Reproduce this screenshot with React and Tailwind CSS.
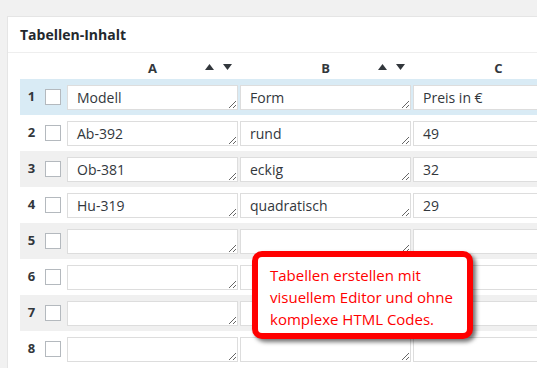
import React from 'react';

const rows = [
  ['Modell', 'Form', 'Preis in €'],
  ['Ab-392', 'rund', '49'],
  ['Ob-381', 'eckig', '32'],
  ['Hu-319', 'quadratisch', '29'],
  ['', '', ''],
  ['', '', ''],
  ['', '', ''],
  ['', '', ''],
];

const columns = ['A', 'B', 'C'];

const rowBg = (index) => {
  if (index === 0) return 'bg-[#d9ebf5]';
  return index % 2 === 0 ? 'bg-[#f0f0f0]' : 'bg-white';
};

const Cell = ({ value }) => (
  <textarea
    defaultValue={value}
    rows={1}
    className="block w-[171px] h-[25px] shrink-0 resize overflow-hidden border border-[#dddddd] bg-white px-[9px] py-[2px] text-[14px] leading-[19px] text-[#32373c] outline-none"
    style={{ fontFamily: '"Open Sans", sans-serif' }}
  />
);

const SortArrows = () => (
  <span className="absolute right-[6px] top-[5px] flex gap-[9px]">
    <svg width="9" height="6" viewBox="0 0 9 6">
      <path d="M4.5 0 L9 6 L0 6 Z" fill="#32373c" />
    </svg>
    <svg width="9" height="6" viewBox="0 0 9 6">
      <path d="M0 0 L9 0 L4.5 6 Z" fill="#32373c" />
    </svg>
  </span>
);

const App = () => {
  return (
    <div
      className="relative w-[537px] h-[368px] overflow-hidden bg-[#f1f1f1] pt-[16px] pl-[7px]"
      style={{ fontFamily: '"Open Sans", sans-serif' }}
    >
      <div className="w-[560px] h-[400px] border border-[#e5e5e5] bg-white">
        {/* Panel header */}
        <div className="h-[36px] border-b border-[#eeeeee] px-[12px] flex items-center">
          <h2 className="text-[14px] font-bold text-[#23282d]">Tabellen-Inhalt</h2>
        </div>

        <div className="pl-[12px]">
          {/* Column headers */}
          <div className="flex h-[26px] items-center pt-[6px]">
            <div className="w-[47px] shrink-0" />
            <div className="flex gap-[2px]">
              {columns.map((col) => (
                <div key={col} className="relative w-[171px] shrink-0 text-center text-[13px] font-bold text-[#32373c]">
                  {col}
                  {col !== 'C' && <SortArrows />}
                </div>
              ))}
            </div>
          </div>

          {/* Rows */}
          {rows.map((row, index) => (
            <div key={index} className={`flex h-[36px] items-center ${rowBg(index)}`}>
              <div className="w-[23px] shrink-0 text-center text-[13px] font-bold text-[#32373c]">{index + 1}</div>
              <div className="ml-[2px] h-[16px] w-[16px] shrink-0 border border-[#b4b9be] bg-white" />
              <div className="ml-[6px] flex gap-[2px]">
                {row.map((value, i) => (
                  <Cell key={i} value={value} />
                ))}
              </div>
            </div>
          ))}
        </div>
      </div>

      {/* Callout */}
      <div className="absolute left-[252px] top-[251px] w-[221px] h-[88px] rounded-[10px] border-[6px] border-[#ff0000] bg-white px-[12px] pt-[7px] shadow-[3px_3px_4px_rgba(0,0,0,0.55)]">
        <p className="text-[15px] leading-[22px] text-[#ff0000]">
          Tabellen erstellen mit visuellem Editor und ohne komplexe HTML Codes.
        </p>
      </div>
    </div>
  );
};

export default App;
